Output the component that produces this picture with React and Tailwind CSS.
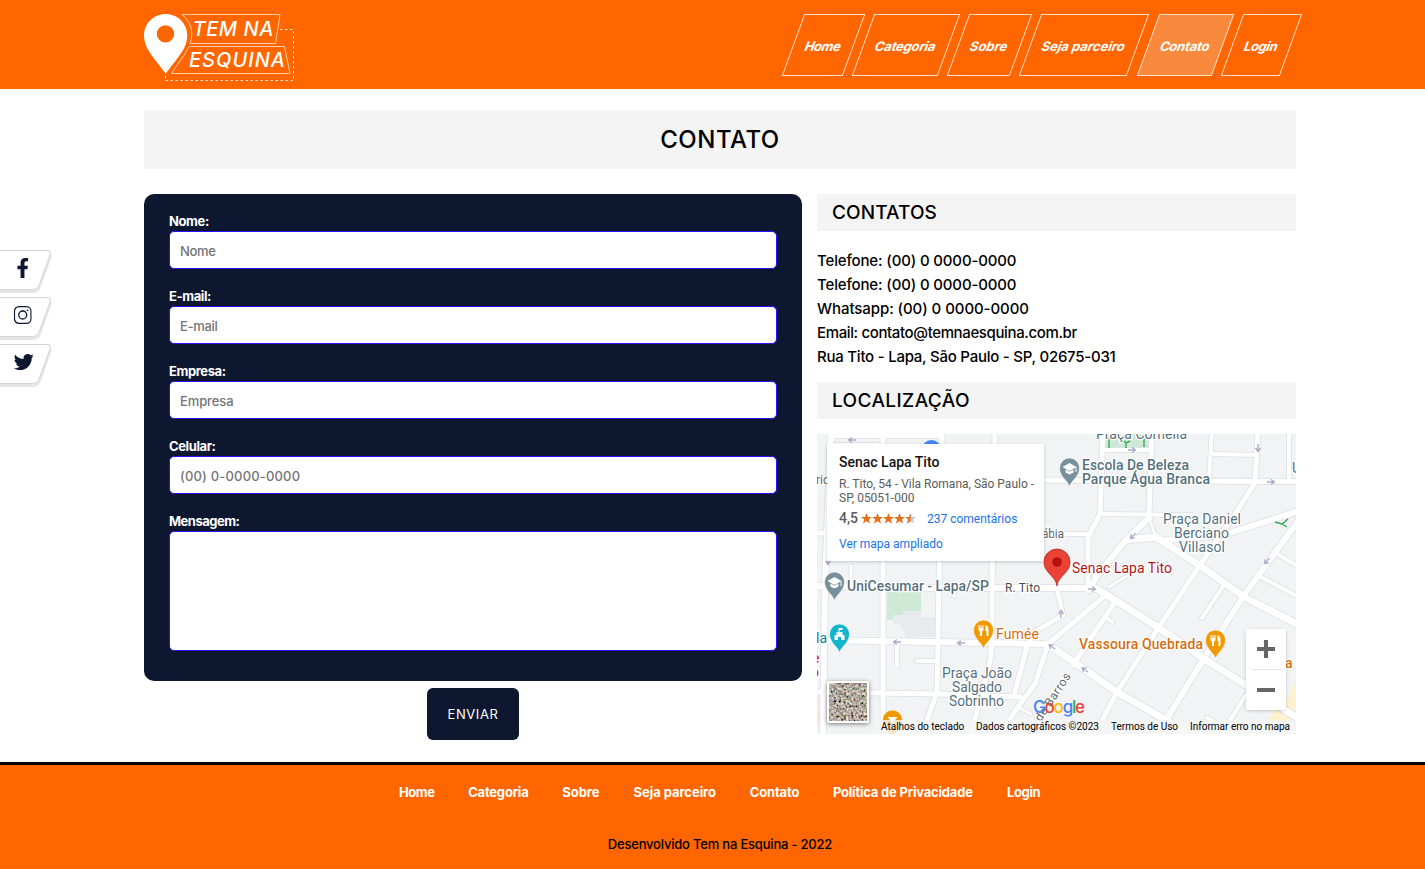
import React from 'react';
import { FaFacebookF, FaTwitter } from 'react-icons/fa';

const nav = [
  { t: 'Home', w: 'w-[61px] tracking-[-0.4px]' },
  { t: 'Categoria', w: 'w-[86px] tracking-[-0.2px]' },
  { t: 'Sobre', w: 'w-[63px] tracking-[0px]' },
  { t: 'Seja parceiro', w: 'w-[108px] tracking-[0px]' },
  { t: 'Contato', w: 'ml-[1px] w-[75px] tracking-[-0.2px]', active: true },
  { t: 'Login', w: 'w-[59px] tracking-[-0.4px]' },
];

const footerLinks = [
  { t: 'Home', w: 'w-[36px] tracking-[-0.4px]' },
  { t: 'Categoria', w: 'w-[61px] tracking-[-0.2px]' },
  { t: 'Sobre', w: 'w-[38px] tracking-[-0.05px]' },
  { t: 'Seja parceiro', w: 'w-[83px] tracking-[-0.05px]' },
  { t: 'Contato', w: 'w-[50px] tracking-[-0.15px]' },
  { t: 'Política de Privacidade', w: 'w-[141px] tracking-[-0.2px]' },
  { t: 'Login', w: 'w-[34px] tracking-[-0.4px]' },
];

const fields = [
  { label: 'Nome:', ph: 'Nome', ls: 'tracking-[-0.3px]' },
  { label: 'E-mail:', ph: 'E-mail', ls: 'tracking-[-0.3px]' },
  { label: 'Empresa:', ph: 'Empresa', ls: 'tracking-[-0.1px]' },
  { label: 'Celular:', ph: '(00) 0-0000-0000', ls: 'tracking-[0.18px]' },
];

function Logo() {
  return (
    <svg width="152" height="70" viewBox="0 0 152 70" className="block" fill="none">
      <path fill="#fff" fillRule="evenodd" d="M21.7 0C9.7 0 0 9.5 0 21.5C0 34 9 43 21.7 59.500C34.4 43 43.300 34 43.300 21.500C43.300 9.500 33.700 0 21.700 0ZM21.500 11.200a8.700 8.700 0 1 1 0 17.400a8.700 8.700 0 0 1 0-17.400Z" />
      <path stroke="#ffd0b0" d="M38 .500H136L131.500 29.500H46C50 19 47.500 8 38 .500Z" />
      <path stroke="#ffd0b0" d="M45 32.500H140.500L146 59.500H27.500C34 49 40 43 45 32.500Z" />
      <path stroke="#ffe0cc" strokeDasharray="2.500 2.500" d="M136 15.500H149.500V66.500H21.500V60" />
      <text x="48.500" y="22" fill="#fff" fontFamily="Inter, sans-serif" fontStyle="italic" fontWeight="500" fontSize="20" textLength="81">TEM NA</text>
      <text x="45" y="53" fill="#fff" fontFamily="Inter, sans-serif" fontStyle="italic" fontWeight="500" fontSize="20" textLength="96">ESQUINA</text>
    </svg>
  );
}

function Instagram() {
  return (
    <svg width="18" height="18" viewBox="0 0 18 18" fill="none" stroke="#0e1730" strokeWidth="1.300">
      <rect x=".700" y=".700" width="16.600" height="16.600" rx="4.600" />
      <circle cx="9" cy="9" r="4" />
      <circle cx="13.800" cy="4.300" r=".900" fill="#0e1730" stroke="none" />
    </svg>
  );
}

const roads = [
  ['M14 -4L10 100L8 150L6 304', 6],
  ['M66 -4V304', 5],
  ['M125 -4L122 150L120 258L104 304', 5],
  ['M178 -4L175 150V208L173 228L153 304', 5],
  ['M14 2H125', 4],
  ['M17 11H66', 4],
  ['M175 46L479 47.500', 5],
  ['M-4 99H10', 5],
  ['M-4 152L120 154L276 154', 6],
  ['M-4 206L120 208L230 210', 6],
  ['M-4 258L120 260L203 263', 5],
  ['M286 -4L283 80L271 103V154', 5],
  ['M335 -4L332 80', 5],
  ['M285 16H335', 4],
  ['M282 80L375 81', 4],
  ['M332 84L309 106L279 143L272 156', 6],
  ['M332 84L339 103', 2.5],
  ['M309 106L339 103L382 131L429 164L482 191', 7],
  ['M395 -4L392 46', 4],
  ['M395 20L439 21', 4],
  ['M441 -4L438 49L417 82L400 106L383 131L342 193L300 258L276 304', 5],
  ['M472 -4V47', 4],
  ['M482 77L406 101L349 106', 6],
  ['M482 86L427 161L386 226L338 304', 6],
  ['M407 151L385 184', 4],
  ['M276 154L282 156L342 194L389 226L429 251L482 285', 7],
  ['M230 210L257 228L300 258L349 286L378 304', 7],
  ['M298 168L256 231', 5],
  ['M289 161L231 210L218 250L203 270L180 304', 5],
  ['M240 155L246 181L219 197L210 212', 4.5],
  ['M210 212L197 262', 5],
  ['M429 261L402 304', 4],
  ['M457 118L482 133', 4],
  ['M444 143L482 163', 4],
  ['M240 100H271', 4],
  ['M80 208V232', 4],
  ['M100 227H120', 4],
  ['M290 184L295 188', 4],
  ['M313 140L292 153', 3],
  ['M34 150V132', 3],
  ['M137 156V162', 4],
  ['M201 273L214 280', 3],
  ['M390 284L398 288', 4],
];

function Pin({ x, y, color, children }) {
  return (
    <g transform={`translate(${x} ${y})`}>
      <path fill={color} stroke="#fff" strokeWidth=".600" d="M0 0C-1 -6 -10 -10 -10 -19A10 10 0 0 1 10 -19C10 -10 1 -6 0 0Z" />
      {children}
    </g>
  );
}

const cap = (
  <g fill="#fff">
    <path d="M-7 -20L0 -24L7 -20L0 -16Z" />
    <path d="M-4 -17.500V-14.500L0 -12.500L4 -14.500V-17.500L0 -15.300Z" />
    <path d="M6 -20h1v5h-1z" />
  </g>
);

const cutlery = (
  <g fill="#fff">
    <path d="M-5 -24h1v3h1v-3h1v3h1v-3h1v4.500q0 1.500-1.500 2V-13h-2V-17.500Q-5 -18-5 -19.500Z" />
    <path d="M2 -24q3 1 3 5v6H3v-5H2Z" />
  </g>
);

function Arrow({ x, y, r }) {
  return (
    <path transform={`translate(${x} ${y}) rotate(${r})`} d="M-4 0H3M0 -2.500L3.500 0L0 2.500" fill="none" stroke="#a9afcb" strokeWidth="1.400" />
  );
}

function MapDrawing() {
  return (
    <svg width="479" height="300" viewBox="0 0 479 300" className="block" fontFamily="Roboto, sans-serif">
      <rect width="479" height="300" fill="#f1f3f4" />
      <path fill="#ceead6" d="M70 158H104V177H86V181H76V186H70Z M287 0H332V14H287Z" />
      <path fill="#e8eaed" d="M104 183H118V203H88V196H84V190H76V181H86V177H104Z" />
      <path fill="#fce4e4" d="M0 262H5V291H0Z" />
      <path fill="#fef1cd" d="M479 246L467 272L479 280Z M459 274L474 283L470 290H449Z" />
      <g fill="none" strokeLinejoin="round" strokeLinecap="round">
        {roads.map(([d, w], i) => <path key={i} d={d} stroke="#dddfe6" strokeWidth={w + 1.6} />)}
        {roads.map(([d, w], i) => <path key={i} d={d} stroke="#fff" strokeWidth={w} />)}
      </g>
      <path fill="none" stroke="#34a853" strokeWidth="1.400" d="M292 4V14M327 4V13M307 7L309 9L313 7M309 9V14M458 88L465 90L471 85M465 90L470 93" />
      <Arrow x="35" y="6" r="180" /><Arrow x="315" y="16" r="0" /><Arrow x="454" y="48" r="0" />
      <Arrow x="441" y="14" r="90" /><Arrow x="316" y="102" r="135" /><Arrow x="450" y="127" r="130" />
      <Arrow x="275" y="155" r="0" /><Arrow x="244" y="180" r="-85" /><Arrow x="80" y="208" r="180" />
      <Arrow x="144" y="209" r="180" /><Arrow x="235" y="213" r="215" /><Arrow x="268" y="236" r="215" /><Arrow x="11" y="127" r="90" />
      <circle cx="114.500" cy="16" r="10" fill="#4285f4" />
      <g stroke="#fff" strokeWidth="2.500" strokeLinejoin="round" paintOrder="stroke" fontSize="14">
        <g fill="#55707d">
          <text x="279" y="5" textLength="91">Praça Cornélia</text>
          <g fontWeight="500">
            <text x="265" y="36" textLength="107">Escola De Beleza</text>
            <text x="265" y="50" textLength="128">Parque Água Branca</text>
            <text x="30" y="157" textLength="142">UniCesumar - Lapa/SP</text>
          </g>
          <text x="346" y="90" textLength="78">Praça Daniel</text>
          <text x="357" y="104" textLength="55">Berciano</text>
          <text x="362" y="118" textLength="46">Villasol</text>
          <text x="125" y="244" textLength="70">Praça João</text>
          <text x="135" y="258" textLength="50">Salgado</text>
          <text x="132" y="272" textLength="55">Sobrinho</text>
          <text x="475" y="39">U</text>
        </g>
        <text x="255" y="139" fill="#b31412" textLength="100">Senac Lapa Tito</text>
        <g fill="#d56e0c" fontWeight="500">
          <text x="179" y="205" textLength="43" fontWeight="400">Fumée</text>
          <text x="262" y="215" textLength="124">Vassoura Quebrada</text>
          <text x="468" y="234">a B</text>
        </g>
        <text x="-1" y="209" fill="#12808e">la</text>
        <text x="-5" y="229" fill="#d93025" fontWeight="500">e</text>
        <text x="-6" y="243" fill="#d93025" fontWeight="500">o</text>
        <g fill="#5f6368" fontSize="12">
          <text x="-1" y="50">ric</text>
          <text x="225" y="104" textLength="22">ábia</text>
          <text x="188" y="158" fontSize="12" fill="#4a4d51" textLength="35">R. Tito</text>
          <text transform="translate(214 303) rotate(-56.500)" textLength="73">ão de Barros</text>
        </g>
      </g>
      <Pin x="252.500" y="53" color="#78909c">{cap}</Pin>
      <Pin x="17.500" y="167" color="#78909c">{cap}</Pin>
      <Pin x="22.500" y="219" color="#12b5cb">
        <path fill="#fff" d="M-1 -25H3V-23H0V-21H3V-18H5V-13H1.500V-16H-1.500V-13H-5V-18H-3V-21H-1Z" />
      </Pin>
      <Pin x="166.500" y="215" color="#f29900">{cutlery}</Pin>
      <Pin x="398.500" y="225" color="#f29900">{cutlery}</Pin>
      <Pin x="75.500" y="305" color="#f29900">
        <path fill="#fff" d="M-5 -22H5L1 -17V-12H-1V-17Z" />
      </Pin>
      <path fill="#ea4335" stroke="#b31412" strokeWidth=".700" d="M240 152C239 142 227 139 227 128A13 13 0 0 1 253 128C253 139 241 142 240 152Z" />
      <circle cx="240" cy="128" r="4.800" fill="#b31412" />
    </svg>
  );
}

function Stars() {
  const star = 'M5.500 0L7 4H11L7.900 6.500L9 10.500L5.500 8.200L2 10.500L3.100 6.500L0 4H4Z';
  return (
    <svg width="56" height="11" viewBox="0 0 56 11" className="-mt-[2px]">
      {[0, 1, 2, 3].map((i) => <path key={i} d={star} fill="#e7711b" transform={`translate(${i * 11} 0)`} />)}
      <path d={star} fill="#c7c7c7" transform="translate(44 0)" />
      <path d="M5.500 0V8.200L2 10.500L3.100 6.500L0 4H4Z" fill="#e7711b" transform="translate(44 0)" />
    </svg>
  );
}

function Satellite() {
  return (
    <svg width="38" height="38" className="block">
      <filter id="terrain" x="0" y="0" width="100%" height="100%">
        <feTurbulence type="fractalNoise" baseFrequency="0.4" numOctaves="4" seed="8" />
        <feColorMatrix values="1.4 .3 .3 0 -.55  1 .7 .2 0 -.55  .9 .4 .6 0 -.6  0 0 0 0 1" />
      </filter>
      <rect width="38" height="38" filter="url(#terrain)" />
    </svg>
  );
}

function MapPanel() {
  return (
    <div className="relative mt-[15px] h-[300px] w-[479px] overflow-hidden font-[Roboto,sans-serif]">
      <MapDrawing />
      <div className="absolute left-[10px] top-[10px] h-[117px] w-[217px] rounded-[2px] bg-white pl-3 pt-[9px] shadow-[0_1px_4px_-1px_rgba(0,0,0,0.3)]">
        <div className="text-[14px] leading-[18px] font-medium text-[#111]">Senac Lapa Tito</div>
        <div className="mt-[6px] text-[12px] leading-[14px] whitespace-nowrap text-[#5b5b5b]">R. Tito, 54 - Vila Romana, São Paulo -<br />SP, 05051-000</div>
        <div className="mt-[5px] flex h-[18px] items-center">
          <span className="-mt-px w-[22px] text-[14px] font-medium text-[#5b5b5b]">4,5</span>
          <Stars />
          <span className="ml-[10px] text-[12px] text-[#1a73e8]">237 comentários</span>
        </div>
        <div className="mt-[8px] text-[12px] leading-[16px] text-[#1a73e8]">Ver mapa ampliado</div>
      </div>
      <div className="absolute left-[10px] top-[247px] rounded-[2px] border-2 border-white shadow-[0_1px_4px_rgba(0,0,0,0.5)]">
        <Satellite />
      </div>
      <div className="absolute left-[216px] top-[263px] text-[17px] leading-[20px] font-medium tracking-[-1.2px] font-[Inter,sans-serif]">
        <span className="text-[#4285f4]">G</span>
        <span className="text-[#ea4335]">o</span>
        <span className="text-[#fbbc04]">o</span>
        <span className="text-[#4285f4]">g</span>
        <span className="text-[#34a853]">l</span>
        <span className="text-[#ea4335]">e</span>
      </div>
      <div className="absolute left-[429px] top-[195px] flex h-[81px] w-[40px] flex-col items-center rounded-[2px] bg-white shadow-[0_1px_4px_-1px_rgba(0,0,0,0.3)]">
        <div className="flex h-[40px] items-center">
          <svg width="18" height="18"><path fill="#666" d="M7 0h4v7h7v4h-7v7H7v-7H0V7h7z" /></svg>
        </div>
        <div className="h-px w-[30px] bg-[#e6e6e6]" />
        <div className="flex h-[40px] items-center">
          <svg width="18" height="4"><path fill="#666" d="M0 0h18v4H0z" /></svg>
        </div>
      </div>
      <div className="absolute bottom-0 right-0 flex h-[14px] items-center gap-[12px] bg-[#f5f5f5]/80 px-[6px] pb-[2px] text-[10px] whitespace-nowrap text-black">
        <span className="w-[83px]">Atalhos do teclado</span>
        <span className="w-[123px]">Dados cartográficos ©2023</span>
        <span className="w-[67px]">Termos de Uso</span>
        <span className="w-[100px]">Informar erro no mapa</span>
      </div>
    </div>
  );
}

const tab = 'flex h-[40px] w-[64px] -ml-[19px] -skew-x-[20deg] items-center rounded-[5px] border border-[#d5d5d5] bg-white shadow-[2px_3px_0_#e5e5e5]';

export default function App() {
  return (
    <div className="relative flex h-[869px] w-[1425px] flex-col overflow-hidden bg-white font-[Inter,sans-serif] text-black">
      <header className="flex h-[89px] shrink-0 justify-between bg-[#ff6600] pl-[144px] pr-[134px] pt-[14px]">
        <Logo />
        <nav className="flex gap-[9px]">
          {nav.map((n) => (
            <a key={n.t} className={`flex h-[62px] -skew-x-[20deg] items-center justify-center border border-[#ffe0cc] pt-[3px] text-[13px] font-bold whitespace-nowrap text-white ${n.w} ${n.active ? 'bg-[#f8893d]' : ''}`}>
              {n.t}
            </a>
          ))}
        </nav>
      </header>

      <main className="ml-[144px] w-[1152px] grow pt-[21px]">
        <h1 className="flex h-[59px] items-center justify-center bg-[#f4f4f4] pt-px text-[24px] font-medium tracking-[0.5px]">CONTATO</h1>
        <div className="mt-[25px] flex gap-[15px]">
          <form className="flex w-[658px] flex-col items-center">
            <div className="flex h-[487px] w-full flex-col rounded-[10px] bg-[#0e1730] px-[25px] pt-[17px]">
              {fields.map((f) => (
                <label key={f.label} className="flex h-[75px] flex-col">
                  <span className="h-[20px] text-[13px] leading-[21px] font-bold tracking-[-0.4px] text-white">{f.label}</span>
                  <input placeholder={f.ph} className={`h-[38px] rounded-[5px] border border-[#2a10ff] bg-white px-[10px] pt-[2px] text-[13px] font-medium placeholder:text-[#757575] ${f.ls}`} />
                </label>
              ))}
              <label className="flex flex-col">
                <span className="h-[20px] text-[13px] leading-[21px] font-bold tracking-[-0.5px] text-white">Mensagem:</span>
                <textarea className="h-[120px] resize-none rounded-[5px] border border-[#2a10ff] bg-white" />
              </label>
            </div>
            <button type="button" className="mt-[7px] h-[52px] w-[92px] rounded-[6px] bg-[#0e1730] pt-px text-[13px] tracking-[0.6px] text-white">ENVIAR</button>
          </form>
          <section className="w-[479px]">
            <h2 className="flex h-[37px] items-center bg-[#f4f4f4] pl-[15px] pt-[2px] text-[19px] font-medium tracking-[0.1px]">CONTATOS</h2>
            <div className="mt-[18px] text-[15px] leading-[24px] font-medium whitespace-nowrap">
              <p className="tracking-[-0.15px]">Telefone: (00) 0 0000-0000</p>
              <p className="tracking-[-0.15px]">Telefone: (00) 0 0000-0000</p>
              <p className="tracking-[-0.07px]">Whatsapp: (00) 0 0000-0000</p>
              <p className="tracking-[-0.37px]">Email: contato@temnaesquina.com.br</p>
              <p className="tracking-[-0.24px]">Rua Tito - Lapa, São Paulo - SP, 02675-031</p>
            </div>
            <h2 className="mt-[13px] flex h-[37px] items-center bg-[#f4f4f4] pl-[15px] pt-[2px] text-[19px] font-medium tracking-[0.4px]">LOCALIZAÇÃO</h2>
            <MapPanel />
          </section>
        </div>
      </main>

      <footer className="flex h-[107px] shrink-0 flex-col items-center border-t-[3px] border-black bg-[#ff6600] pl-[15px] pt-[17px]">
        <nav className="flex gap-[33.2px] text-[13px] leading-[20px] font-bold whitespace-nowrap text-white">
          {footerLinks.map((f) => <a key={f.t} className={f.w}>{f.t}</a>)}
        </nav>
        <p className="mt-[32px] text-[13px] leading-[20px] font-medium tracking-[-0.2px]">Desenvolvido Tem na Esquina - 2022</p>
      </footer>

      <aside className="absolute left-0 top-[250px] flex flex-col gap-[7px]">
        <div className={tab}><span className="ml-[30px] -mt-[4px] skew-x-[20deg]"><FaFacebookF size={20} color="#0e1730" /></span></div>
        <div className={tab}><span className="ml-[31px] -mt-[4px] skew-x-[20deg]"><Instagram /></span></div>
        <div className={tab}><span className="ml-[31px] -mt-[4px] skew-x-[20deg]"><FaTwitter size={20} color="#0e1730" /></span></div>
      </aside>
    </div>
  );
}
